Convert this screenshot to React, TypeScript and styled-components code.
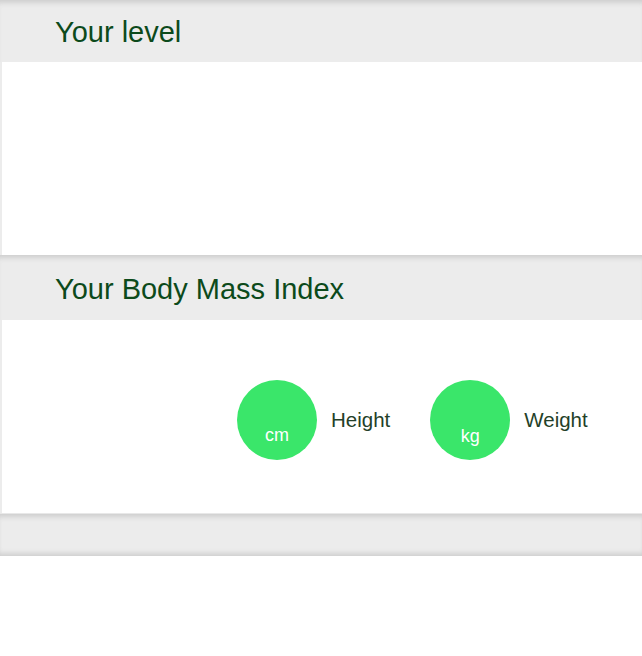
import React from "react";
import styled, { createGlobalStyle } from "styled-components";

const Global = createGlobalStyle`
  html, body { margin: 0; padding: 0; background: #fff; }
  body { font-family: "Liberation Sans", Arial, sans-serif; }
`;

const Page = styled.div`
  width: 642px;
  display: flex;
  flex-direction: column;
`;

const SectionHeader = styled.div<{ $h: number }>`
  height: ${(p) => p.$h}px;
  background: #ececec;
  box-shadow: inset 0 6px 5px -3px #cfcfcf;
  display: flex;
  align-items: center;
  padding-left: 55px;
  padding-top: 3px;
  box-sizing: border-box;
`;

const Title = styled.h2`
  margin: 0;
  font-weight: 400;
  font-size: 29px;
  letter-spacing: 0;
  color: #0c4a1b;
`;

const Body = styled.div<{ $h: number }>`
  height: ${(p) => p.$h}px;
  background: #fff;
  border-left: 2px solid #ececec;
  box-sizing: border-box;
  display: flex;
  align-items: center;
  padding-left: 235px;
  padding-top: 7px;
`;

const Footer = styled.div`
  height: 43px;
  background: #ececec;
  border-top: 1px solid #e8e8e8;
  box-shadow: inset 0 6px 5px -3px #cfcfcf, inset 0 -6px 5px -3px #d0d0d0;
  box-sizing: border-box;
`;

const Input = styled.div<{ $gap: number }>`
  display: flex;
  align-items: center;
  margin-right: ${(p) => p.$gap}px;
`;

const Circle = styled.div`
  width: 80px;
  height: 80px;
  border-radius: 50%;
  background: #3ae66a;
  display: flex;
  justify-content: center;
  align-items: flex-end;
  box-sizing: border-box;
`;

const Unit = styled.span<{ $pb: number }>`
  color: #fff;
  font-size: 18px;
  padding-bottom: ${(p) => p.$pb}px;
`;

const Label = styled.span`
  margin-left: 14px;
  font-size: 20.5px;
  color: #243f28;
`;

export default function App() {
  return (
    <>
      <Global />
      <Page>
        <SectionHeader $h={62}>
          <Title>Your level</Title>
        </SectionHeader>
        <Body $h={193} />
        <SectionHeader $h={65}>
          <Title>Your Body Mass Index</Title>
        </SectionHeader>
        <Body $h={193}>
          <Input $gap={40}>
            <Circle>
              <Unit $pb={14}>cm</Unit>
            </Circle>
            <Label>Height</Label>
          </Input>
          <Input $gap={0}>
            <Circle>
              <Unit $pb={13}>kg</Unit>
            </Circle>
            <Label>Weight</Label>
          </Input>
        </Body>
        <Footer />
      </Page>
    </>
  );
}
